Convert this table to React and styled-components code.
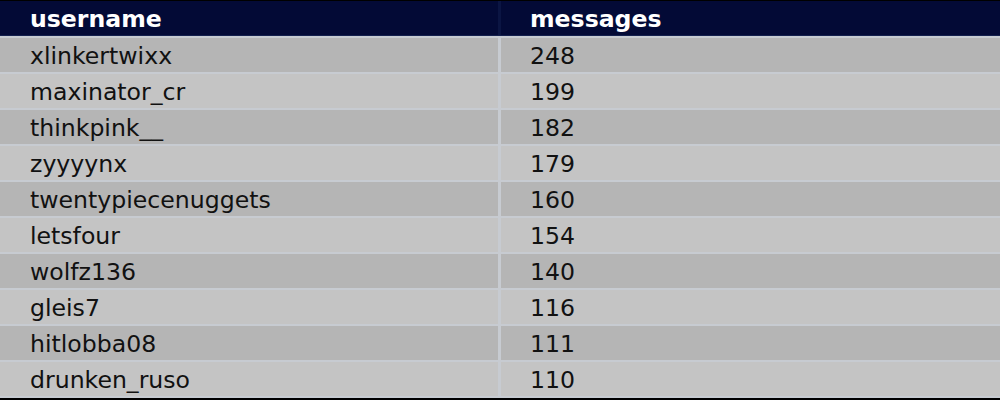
import React from "react";
import styled, { createGlobalStyle } from "styled-components";

const Global = createGlobalStyle`
  html, body { margin: 0; padding: 0; background: #000; }
  body { font-family: "DejaVu Sans", sans-serif; }
`;

const rows = [
  ["xlinkertwixx", 248],
  ["maxinator_cr", 199],
  ["thinkpink__", 182],
  ["zyyyynx", 179],
  ["twentypiecenuggets", 160],
  ["letsfour", 154],
  ["wolfz136", 140],
  ["gleis7", 116],
  ["hitlobba08", 111],
  ["drunken_ruso", 110],
];

const Table = styled.div`
  margin-top: 1px;
  width: 1000px;
  display: grid;
  grid-template-columns: 498px 499px;
  column-gap: 3px;
  row-gap: 2px;
  background: #c7cbd1;
  padding-bottom: 2px;
`;

const HeadCell = styled.div`
  height: 34px;
  background: #030a36;
  border-bottom: 1px solid #14204e;
  color: #fff;
  font-weight: bold;
  font-size: 23.6px;
  line-height: 36px;
  margin-left: ${(p) => (p.$shift ? "-3px" : "0")};
  padding-left: ${(p) => (p.$shift ? "32px" : "30px")};
  box-shadow: ${(p) => (p.$shift ? "inset 3px 0 0 #0b1543" : "none")};
  white-space: nowrap;
`;

const Cell = styled.div`
  height: 34px;
  background: ${(p) => (p.$odd ? "#c4c4c4" : "#b5b5b5")};
  color: #111;
  font-size: 23.6px;
  line-height: 36px;
  padding-left: ${(p) => (p.$right ? "29px" : "30px")};
  white-space: nowrap;
`;

export default function App() {
  return (
    <>
      <Global />
      <Table>
        <HeadCell>username</HeadCell>
        <HeadCell $shift>messages</HeadCell>
        {rows.map(([name, n], i) => (
          <React.Fragment key={name}>
            <Cell $odd={i % 2 === 1}>{name}</Cell>
            <Cell $odd={i % 2 === 1} $right>
              {n}
            </Cell>
          </React.Fragment>
        ))}
      </Table>
    </>
  );
}
